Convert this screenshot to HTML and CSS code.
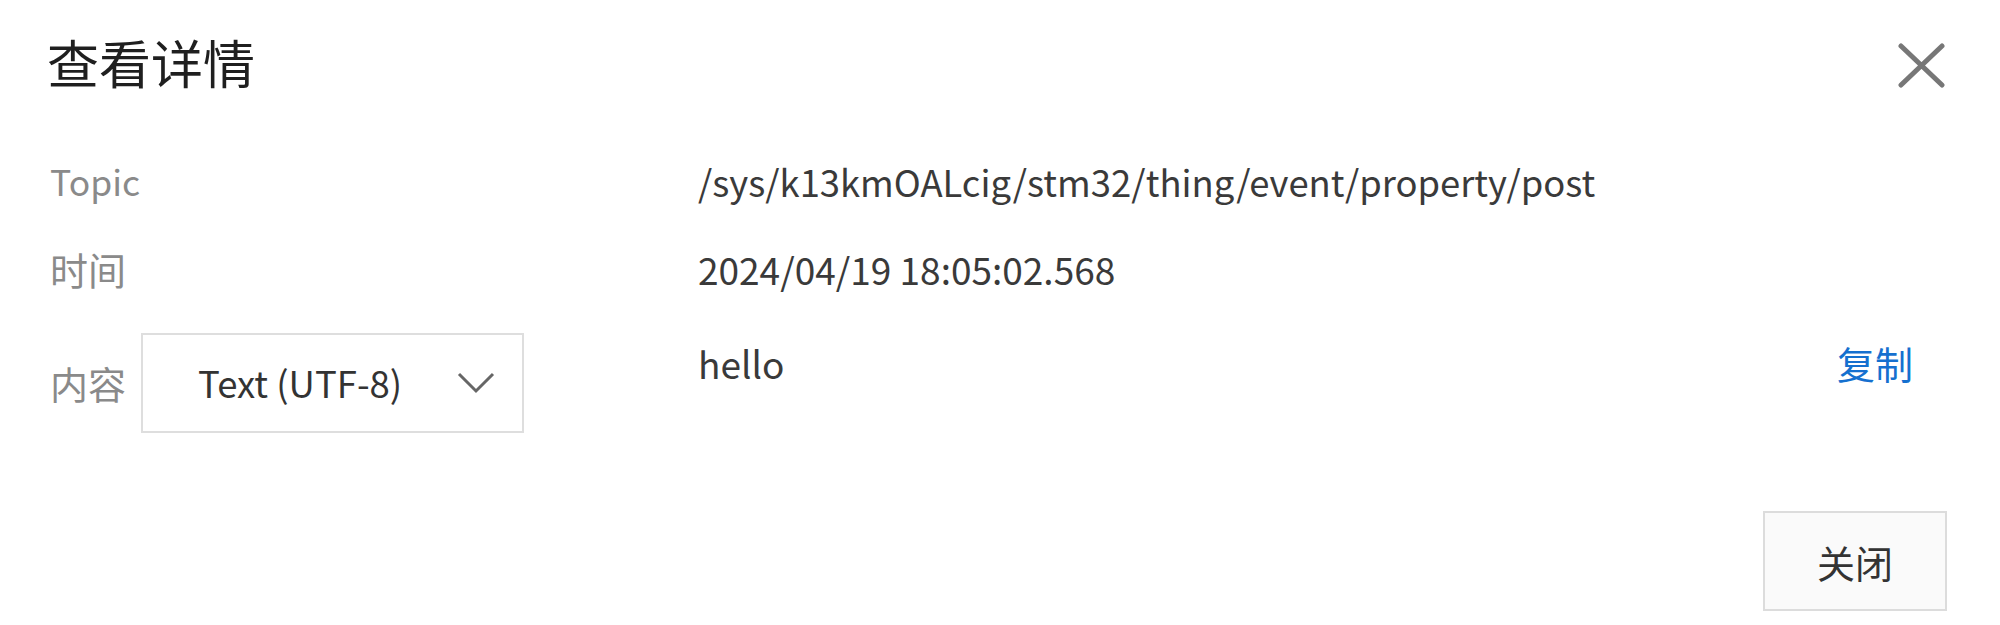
FILE: index.html
```html
<!DOCTYPE html>
<html lang="zh-CN">
<head>
<meta charset="utf-8">
<title>查看详情</title>
<link rel="stylesheet" href="styles.css">
</head>
<body>
<div class="dialog">
  <header class="head">
    <h1 class="title">查看详情</h1>
    <button class="close" aria-label="关闭">
      <svg width="47" height="45" viewBox="0 0 47 45"><path d="M3 3 L44 42 M44 3 L3 42" stroke="#777" stroke-width="5" stroke-linecap="round" fill="none"/></svg>
    </button>
  </header>
  <div class="body">
    <div class="row">
      <div class="label label-latin">Topic</div>
      <div class="value value-topic">/sys/k13kmOALcig/stm32/thing/event/property/post</div>
    </div>
    <div class="row">
      <div class="label">时间</div>
      <div class="value">2024/04/19 18:05:02.568</div>
    </div>
    <div class="row row-content">
      <div class="label label-with-select">
        <span>内容</span>
        <div class="select">
          <span class="select-text">Text (UTF-8)</span>
          <svg class="chev" width="40" height="24" viewBox="0 0 40 24"><path d="M3 3 L20 20 L37 3" stroke="#666" stroke-width="3" fill="none"/></svg>
        </div>
      </div>
      <div class="value value-content">hello</div>
      <a class="copy">复制</a>
    </div>
  </div>
  <footer class="foot">
    <button class="btn">关闭</button>
  </footer>
</div>
</body>
</html>
```
FILE: styles.css
```css
html, body {
  margin: 0;
  padding: 0;
  background: #fff;
}
body {
  width: 2000px;
  height: 625px;
  overflow: hidden;
  font-family: "Noto Sans CJK SC", "Noto Sans", sans-serif;
}
.dialog {
  width: 2000px;
  height: 625px;
  box-sizing: border-box;
}
.head {
  display: flex;
  justify-content: space-between;
  align-items: flex-start;
  padding: 37px 55px 0 47px;
}
.title {
  margin: 0;
  font-size: 52px;
  line-height: 50px;
  font-weight: 400;
  color: #1f1f1f;
}
.close {
  border: 0;
  background: none;
  padding: 0;
  margin-top: 6px;
  width: 47px;
  height: 45px;
  display: block;
}
.close svg { display: block; }
.body {
  padding: 69px 87px 0 50px;
}
.row {
  display: grid;
  grid-template-columns: 648px 1fr auto;
  font-size: 38px;
  line-height: 48px;
  margin-bottom: 40px;
}
.label {
  color: #8a8a8a;
}
.label-latin {
  font-size: 35.5px;
}
.value {
  color: #3a3a3a;
  font-size: 37px;
}
.value-topic {
  font-size: 36.4px;
}
.label-with-select {
  display: flex;
  align-items: center;
  gap: 15px;
}
.select {
  box-sizing: border-box;
  width: 383px;
  height: 100px;
  border: 2px solid #dedede;
  display: flex;
  align-items: center;
  justify-content: space-between;
  padding: 0 26px 0 55px;
  color: #333;
  font-size: 36.5px;
}
.chev { display: block; }
.value-content {
  padding-top: 6px;
}
.copy {
  color: #1570cf;
  padding-top: 6px;
  cursor: pointer;
}
.row-content {
  margin-bottom: 0;
}
.foot {
  display: flex;
  justify-content: flex-end;
  padding: 78px 53px 0 50px;
}
.btn {
  box-sizing: border-box;
  width: 184px;
  height: 100px;
  border: 2px solid #dcdcdc;
  background: #fafafa;
  font-family: "Noto Sans CJK SC", sans-serif;
  font-size: 38px;
  color: #333;
  padding: 0;
}
```
